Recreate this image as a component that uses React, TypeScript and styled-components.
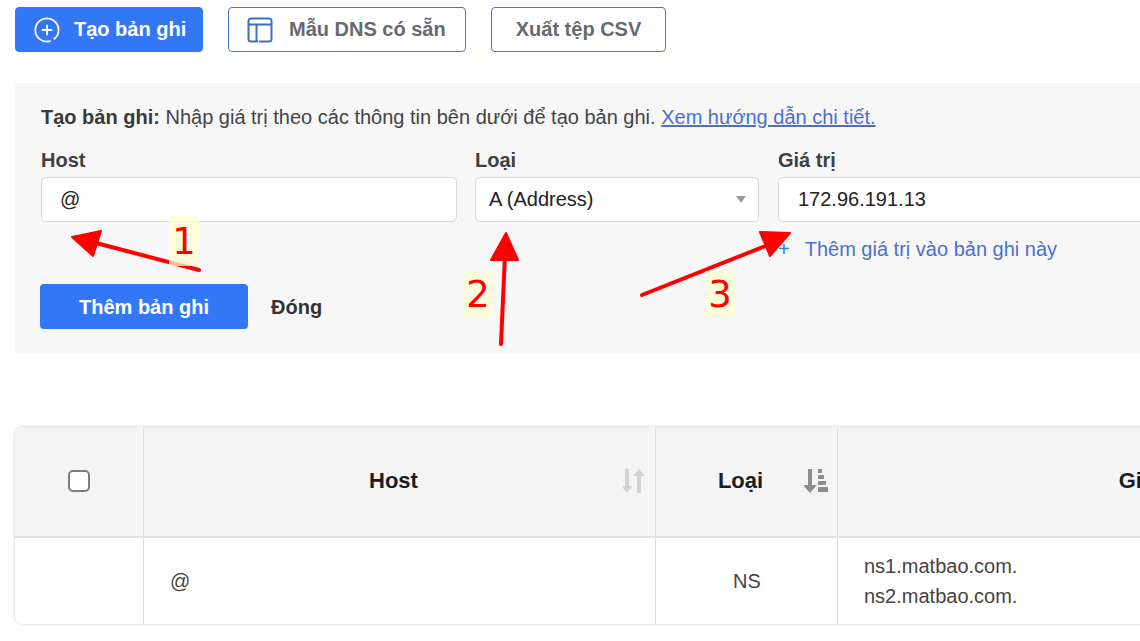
import React from 'react';
import styled, { createGlobalStyle } from 'styled-components';

const GlobalStyle = createGlobalStyle`
  html, body {
    margin: 0;
    padding: 0;
    background: #fff;
    overflow: hidden;
  }
  * {
    box-sizing: border-box;
  }
`;

const Page = styled.div`
  position: relative;
  width: 1140px;
  height: 641px;
  overflow: hidden;
  padding: 7px 0 0 15px;
  font-family: 'Liberation Sans', Arial, sans-serif;
  color: #333;
`;

const Toolbar = styled.div`
  display: flex;
  gap: 25px;
  height: 45px;
`;

const ToolButton = styled.button<{ $primary?: boolean; $width: number; $gap?: number; $inset?: number }>`
  display: flex;
  align-items: center;
  justify-content: ${(p) => (p.$inset ? 'flex-start' : 'center')};
  gap: ${(p) => p.$gap ?? 0}px;
  width: ${(p) => p.$width}px;
  height: 45px;
  padding: 0 0 0 ${(p) => p.$inset ?? 0}px;
  border-radius: 4px;
  border: 1px solid ${(p) => (p.$primary ? '#3377f6' : '#4479d0')};
  background: ${(p) => (p.$primary ? '#3377f6' : '#fff')};
  color: ${(p) => (p.$primary ? '#fff' : '#666a70')};
  font: bold 20px 'Liberation Sans', Arial, sans-serif;
`;

const Panel = styled.section`
  width: 1200px;
  height: 271px;
  margin-top: 31px;
  padding: 22px 0 0 26px;
  background: #f7f7f8;
`;

const Intro = styled.p`
  margin: 0;
  font-size: 20px;
  line-height: 24px;
  color: #444;

  b {
    color: #3a3a3a;
  }

  a {
    color: #4a6fd0;
    text-decoration: underline;
  }
`;

const Fields = styled.div`
  display: flex;
  gap: 18px;
  margin-top: 19px;
`;

const Field = styled.div<{ $width: number }>`
  width: ${(p) => p.$width}px;
  flex: none;

  &:last-child {
    margin-left: 1px;
  }
`;

const Label = styled.div`
  height: 24px;
  font-size: 20px;
  font-weight: bold;
  line-height: 24px;
  color: #404040;
`;

const Control = styled.div<{ $inset: number }>`
  display: flex;
  align-items: center;
  justify-content: space-between;
  height: 45px;
  margin-top: 5px;
  padding: 0 12px 0 ${(p) => p.$inset}px;
  background: #fff;
  border: 1px solid #d9d9d9;
  border-radius: 5px;
  font-size: 20px;
  color: #222;
`;

const Caret = styled.span`
  width: 0;
  height: 0;
  border-left: 5px solid transparent;
  border-right: 5px solid transparent;
  border-top: 7px solid #9a9a9a;
`;

const AddValue = styled.div`
  display: flex;
  align-items: center;
  gap: 15px;
  height: 24px;
  margin-top: 15px;
  font-size: 20px;
  color: #4a6fd0;
  white-space: nowrap;

  span {
    color: #3377f6;
  }
`;

const Actions = styled.div`
  display: flex;
  align-items: center;
  gap: 23px;
  margin: 23px 0 0 -1px;
`;

const SaveButton = styled.button`
  width: 208px;
  height: 45px;
  padding: 2px 0 0;
  border: 0;
  border-radius: 4px;
  background: #3377f6;
  color: #fff;
  font: bold 20px 'Liberation Sans', Arial, sans-serif;
`;

const CloseLink = styled.span`
  padding-top: 1px;
  font-size: 20px;
  font-weight: bold;
  color: #333;
`;

const RecordTable = styled.div`
  width: 1460px;
  margin-top: 73px;
  border-radius: 8px;
  box-shadow: 0 0 3px rgba(0, 0, 0, 0.25);
  overflow: hidden;
  background: #fff;
`;

const Row = styled.div<{ $head?: boolean }>`
  display: grid;
  grid-template-columns: 128px 512px 182px 1fr;
  height: ${(p) => (p.$head ? '111px' : '86px')};
  background: ${(p) => (p.$head ? '#f4f4f5' : '#fff')};
  border-bottom: ${(p) => (p.$head ? '2px solid #e2e2e2' : '0')};
`;

const HeadCell = styled.div`
  position: relative;
  display: flex;
  align-items: center;
  justify-content: center;
  padding: 0 12px 2px 0;
  border-left: 1px solid #dcdcdc;
  font-size: 22px;
  font-weight: bold;
  color: #1c1c22;

  &:first-child {
    border-left: 0;
    padding-right: 0;
  }
`;

const SortIcon = styled.svg`
  position: absolute;
  right: 9px;
  top: 50%;
  margin-top: -15px;
`;

const CheckBox = styled.span`
  width: 22px;
  height: 22px;
  background: #fff;
  border: 2px solid #7c7c7c;
  border-radius: 5px;
`;

const Cell = styled.div<{ $center?: boolean }>`
  display: flex;
  flex-direction: column;
  justify-content: center;
  align-items: ${(p) => (p.$center ? 'center' : 'flex-start')};
  padding-left: ${(p) => (p.$center ? '1px' : '26px')};
  border-left: 1px solid #dcdcdc;
  font-size: 20px;
  line-height: 30px;
  color: #444;

  &:first-child {
    border-left: 0;
  }
`;

const Annotation = styled.svg`
  position: absolute;
  left: 0;
  top: 0;
  pointer-events: none;
`;

const StepNumber = styled.span<{ $x: number; $y: number; $h: number }>`
  position: absolute;
  left: ${(p) => p.$x}px;
  top: ${(p) => p.$y}px;
  width: 30px;
  height: ${(p) => p.$h}px;
  display: flex;
  align-items: center;
  justify-content: center;
  background: rgba(255, 255, 210, 0.75);
  color: #f00;
  font-family: 'DejaVu Sans', sans-serif;
  font-size: 37px;
  line-height: 1;
`;

const arrows = [
  { line: '199,270 96,243', head: '72,237 101,231 93,256' },
  { line: '501,344 505,255', head: '506,233 491,260 518,260' },
  { line: '642,295 773,243', head: '760,232 790,233 770,256' },
];

const PlusCircle = () => (
  <svg width="26" height="26" viewBox="0 0 26 26" fill="none" stroke="#fff" strokeWidth="1.8" strokeLinecap="round">
    <path d="M16 24.2A11.6 11.6 0 1 1 20.5 21.8" />
    <path d="M13 8.5v9M8.5 13h9" />
  </svg>
);

const TemplateIcon = () => (
  <svg width="26" height="26" viewBox="0 0 26 26" fill="none" stroke="#3a6fc4" strokeWidth="2">
    <path d="M11 24.5H4A2.5 2.5 0 0 1 1.5 22V4A2.5 2.5 0 0 1 4 1.5H22A2.5 2.5 0 0 1 24.5 4V22A2.5 2.5 0 0 1 22 24.5H12" />
    <path d="M1.5 7.5h23M9.5 7.5v17" />
  </svg>
);

const SortBoth = () => (
  <SortIcon width="24" height="28" viewBox="0 0 24 28" fill="#d2d2d2">
    <path d="M3 2h4v17h3.5l-5.5 7-5.5-7H3z" />
    <path d="M15 26h4V9h4l-6-7-6 7h4z" />
  </SortIcon>
);

const SortAsc = () => (
  <SortIcon width="24" height="28" viewBox="0 0 24 28" fill="#8e8e8e">
    <path d="M4 2h4v16h5l-7 8-7-8h5z" />
    <path d="M14 2h4v4h-4zM14 8h6v4h-6zM14 14h8v4h-8zM14 20h10v5h-10z" />
  </SortIcon>
);

export default function App() {
  return (
    <Page>
      <GlobalStyle />
      <Toolbar>
        <ToolButton $primary $width={188} $gap={14} $inset={18}>
          <PlusCircle />
          Tạo bản ghi
        </ToolButton>
        <ToolButton $width={238} $gap={16} $inset={18}>
          <TemplateIcon />
          Mẫu DNS có sẵn
        </ToolButton>
        <ToolButton $width={175}>Xuất tệp CSV</ToolButton>
      </Toolbar>

      <Panel>
        <Intro>
          <b>Tạo bản ghi:</b> Nhập giá trị theo các thông tin bên dưới để tạo bản ghi.{' '}
          <a href="#guide">Xem hướng dẫn chi tiết.</a>
        </Intro>
        <Fields>
          <Field $width={416}>
            <Label>Host</Label>
            <Control $inset={18}>@</Control>
          </Field>
          <Field $width={284}>
            <Label>Loại</Label>
            <Control $inset={13}>
              A (Address)
              <Caret />
            </Control>
          </Field>
          <Field $width={400}>
            <Label>Giá trị</Label>
            <Control $inset={19}>172.96.191.13</Control>
            <AddValue>
              <span>+</span>
              Thêm giá trị vào bản ghi này
            </AddValue>
          </Field>
        </Fields>
        <Actions>
          <SaveButton>Thêm bản ghi</SaveButton>
          <CloseLink>Đóng</CloseLink>
        </Actions>
      </Panel>

      <RecordTable>
        <Row $head>
          <HeadCell>
            <CheckBox />
          </HeadCell>
          <HeadCell>
            Host
            <SortBoth />
          </HeadCell>
          <HeadCell>
            Loại
            <SortAsc />
          </HeadCell>
          <HeadCell>Giá trị</HeadCell>
        </Row>
        <Row>
          <Cell />
          <Cell>@</Cell>
          <Cell $center>NS</Cell>
          <Cell>
            <span>ns1.matbao.com.</span>
            <span>ns2.matbao.com.</span>
          </Cell>
        </Row>
      </RecordTable>

      <Annotation width="1140" height="641">
        {arrows.map((a) => (
          <g key={a.head}>
            <polyline points={a.line} fill="none" stroke="#f00" strokeWidth="4" strokeLinecap="round" />
            <polygon points={a.head} fill="#f00" stroke="#f00" strokeWidth="2" strokeLinejoin="round" />
          </g>
        ))}
      </Annotation>
      <StepNumber $x={169} $y={216} $h={50}>1</StepNumber>
      <StepNumber $x={463} $y={271} $h={46}>2</StepNumber>
      <StepNumber $x={705} $y={271} $h={46}>3</StepNumber>
    </Page>
  );
}
